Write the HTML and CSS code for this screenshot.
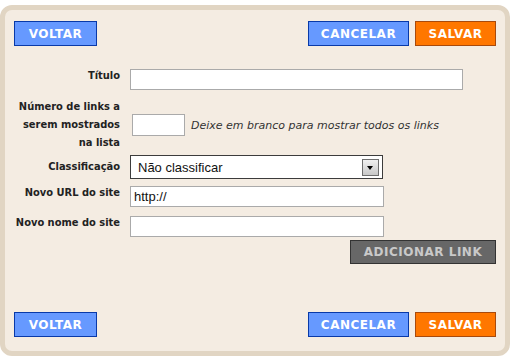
FILE: index.html
```html
<!DOCTYPE html>
<html lang="pt">
<head>
  <meta charset="UTF-8">
  <title>Adicionar link</title>
  <link rel="stylesheet" href="styles.css">
</head>
<body>
  <div class="panel">
    <div class="toolbar">
      <button class="btn btn-blue btn-back">VOLTAR</button>
      <div class="toolbar-right">
        <button class="btn btn-blue btn-cancel">CANCELAR</button>
        <button class="btn btn-orange btn-save">SALVAR</button>
      </div>
    </div>

    <form class="link-form" onsubmit="return false">
      <div class="form-row row-title">
        <label for="titulo">Título</label>
        <input type="text" id="titulo" class="field field-long">
      </div>

      <div class="form-row row-count">
        <label for="numLinks" class="label-multi">Número de links a serem mostrados na lista</label>
        <input type="text" id="numLinks" class="field field-short">
        <span class="hint">Deixe em branco para mostrar todos os links</span>
      </div>

      <div class="form-row row-class">
        <label for="classif" class="label-select">Classificação</label>
        <div class="select-wrap">
          <select id="classif" class="select">
            <option>Não classificar</option>
          </select>
          <span class="select-arrow"></span>
        </div>
      </div>

      <div class="form-row row-url">
        <label for="url">Novo URL do site</label>
        <input type="text" id="url" class="field field-mid" value="http://">
      </div>

      <div class="form-row row-name">
        <label for="nome">Novo nome do site</label>
        <input type="text" id="nome" class="field field-mid">
      </div>

      <div class="form-actions">
        <button class="btn btn-gray">ADICIONAR LINK</button>
      </div>
    </form>

    <div class="toolbar toolbar-bottom">
      <button class="btn btn-blue btn-back">VOLTAR</button>
      <div class="toolbar-right">
        <button class="btn btn-blue btn-cancel">CANCELAR</button>
        <button class="btn btn-orange btn-save">SALVAR</button>
      </div>
    </div>
  </div>
</body>
</html>
```

FILE: styles.css
```css
body {
  margin: 0;
  background-color: #fff;
  font-family: 'DejaVu Sans', Verdana, sans-serif;
}

.panel {
  box-sizing: border-box;
  margin-top: 5px;
  width: 510px;
  height: 351px;
  padding: 11px 9px 14px;
  background-color: #f4ece2;
  border: 5px solid #e1d5c3;
  border-radius: 12px;
  display: flex;
  flex-direction: column;
}

.toolbar {
  display: flex;
  justify-content: space-between;
}

.toolbar-bottom {
  margin-top: auto;
}

.toolbar-right {
  display: flex;
  gap: 6px;
}

.btn {
  box-sizing: border-box;
  height: 25px;
  padding: 0;
  border: 1px solid;
  font-family: 'DejaVu Sans', Verdana, sans-serif;
  font-weight: bold;
  font-size: 12px;
  letter-spacing: 0.5px;
  color: #fff;
  cursor: pointer;
}

.btn-blue {
  background-color: #6699ff;
  border-color: #0839a8;
}

.btn-orange {
  background-color: #ff7700;
  border-color: #a84a0c;
}

.btn-gray {
  width: 146px;
  height: 24px;
  background-color: #676767;
  border-color: #333;
  color: #c9c9c9;
}

.btn-back { width: 83px; }
.btn-cancel { width: 101px; }
.btn-save { width: 81px; }

.link-form {
  margin-top: 23px;
  display: flex;
  flex-direction: column;
}

.form-row {
  display: flex;
  align-items: flex-start;
}

.form-row label {
  flex: 0 0 106px;
  margin-right: 10px;
  text-align: right;
  font-family: 'DejaVu Sans Condensed', 'DejaVu Sans', sans-serif;
  font-weight: bold;
  font-size: 11px;
  line-height: 14px;
  color: #222;
}

.row-title { margin-bottom: 8px; }
.row-count { margin-bottom: 3px; align-items: center; }
.row-class { margin-bottom: 7px; }
.row-url { margin-bottom: 9px; }
.row-name { margin-bottom: 3px; }

.form-row .label-multi {
  line-height: 18px;
}

.form-row .label-select {
  padding-top: 5px;
}

.field {
  box-sizing: border-box;
  height: 21px;
  margin: 0;
  padding: 0 3px;
  border: 1px solid #aaa;
  background-color: #fff;
  font-family: 'Liberation Sans', Arial, sans-serif;
  font-size: 13px;
  color: #111;
  outline: none;
}

.field-long { width: 333px; }
.field-mid { width: 254px; }

.field-short {
  width: 53px;
  height: 22px;
  margin-left: 2px;
}

.hint {
  margin-left: 6px;
  font-style: italic;
  font-size: 11px;
  color: #333;
}

.select-wrap {
  position: relative;
  width: 253px;
  height: 24px;
}

.select {
  box-sizing: border-box;
  width: 100%;
  height: 100%;
  margin: 0;
  padding: 0 7px;
  border: 1px solid #3c3c3c;
  border-radius: 0;
  background-color: #fff;
  -webkit-appearance: none;
  appearance: none;
  font-family: 'Liberation Sans', Arial, sans-serif;
  font-size: 13px;
  color: #111;
  outline: none;
}

.select-arrow {
  position: absolute;
  top: 4px;
  right: 4px;
  box-sizing: border-box;
  width: 17px;
  height: 17px;
  border: 1px solid #6e6e6e;
  background: linear-gradient(#f0f0f0, #c8c8c8);
  pointer-events: none;
}

.select-arrow::after {
  content: "";
  position: absolute;
  left: 4px;
  top: 6px;
  border-left: 3.5px solid transparent;
  border-right: 3.5px solid transparent;
  border-top: 4px solid #000;
}

.form-actions {
  display: flex;
  justify-content: flex-end;
}
```
